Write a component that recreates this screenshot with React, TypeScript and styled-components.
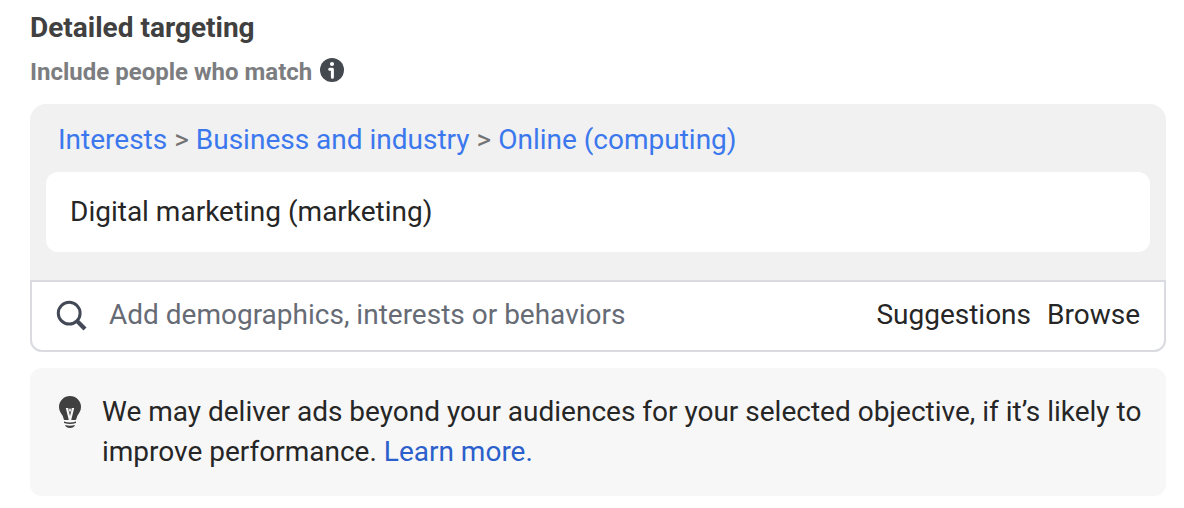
import React from "react";
import styled, { createGlobalStyle } from "styled-components";

const GlobalStyle = createGlobalStyle`
  *, *::before, *::after { box-sizing: border-box; }
  body {
    margin: 0;
    background: #fff;
    color: #262626;
    font-family: Roboto, "Liberation Sans", sans-serif;
    font-size: 28px;
    line-height: 40px;
  }
`;

const Page = styled.main`
  padding: 8px 18px 12px 30px;
`;

const Title = styled.h1`
  margin: 0;
  font-size: 28px;
  line-height: 40px;
  font-weight: 700;
  color: #404040;
`;

const Subtitle = styled.h2`
  display: flex;
  align-items: center;
  gap: 8px;
  margin: 4px 0 12px;
  font-size: 24px;
  line-height: 40px;
  font-weight: 700;
  color: #7c7d80;
`;

const InfoButton = styled.button`
  display: flex;
  padding: 0 0 4px;
  border: 0;
  background: none;
  cursor: pointer;
`;

const Selector = styled.section`
  border-radius: 16px 16px 12px 12px;
  background: #f1f1f1;
`;

const Selected = styled.div`
  padding: 16px 16px 28px;
`;

const Breadcrumb = styled.nav`
  padding: 0 12px 12px;
  color: #737373;
`;

const Link = styled.a<{ $dark?: boolean }>`
  color: ${(p) => (p.$dark ? "#2b5fcb" : "#3b78ee")};
  text-decoration: none;
`;

const Interest = styled.div`
  padding: 20px 24px;
  border-radius: 12px;
  background: #fff;
`;

const SearchRow = styled.form`
  display: flex;
  align-items: center;
  height: 72px;
  padding: 0 24px 2px;
  border: 2px solid #dadbe0;
  border-radius: 0 0 12px 12px;
  background: #fff;
`;

const SearchInput = styled.input`
  flex: 1;
  min-width: 0;
  height: 40px;
  margin-left: 21px;
  padding: 0;
  border: 0;
  outline: 0;
  background: none;
  color: #262626;
  font: inherit;
  &::placeholder { color: #666b75; opacity: 1; }
`;

const TextButton = styled.button`
  margin-left: 16px;
  padding: 0;
  border: 0;
  background: none;
  color: #262626;
  font: inherit;
  cursor: pointer;
`;

const Notice = styled.aside`
  display: flex;
  align-items: flex-start;
  gap: 20px;
  margin-top: 16px;
  padding: 24px 24px 24px 28px;
  border-radius: 12px;
  background: #f7f7f7;
`;

const NoticeIcon = styled.span`
  display: flex;
  flex: none;
  padding-top: 4px;
`;

const NoticeText = styled.p`
  margin: 0;
`;

export default function App() {
  return (
    <>
      <GlobalStyle />
      <Page>
        <Title>Detailed targeting</Title>
        <Subtitle>
          Include people who match
          <InfoButton type="button" aria-label="More information">
            <svg width="24" height="24" viewBox="0 0 24 24">
              <circle cx="12" cy="12" r="12" fill="#444950" />
              <circle cx="12" cy="6" r="2.1" fill="#fff" />
              <path d="M9.7 11.2h2.7v8" fill="none" stroke="#fff" strokeWidth="3" strokeLinecap="round" strokeLinejoin="round" />
            </svg>
          </InfoButton>
        </Subtitle>
        <Selector>
          <Selected>
            <Breadcrumb aria-label="Category">
              <Link href="#interests">Interests</Link>
              {" > "}
              <Link href="#business">Business and industry</Link>
              {" > "}
              <Link href="#online">Online (computing)</Link>
            </Breadcrumb>
            <Interest>Digital marketing (marketing)</Interest>
          </Selected>
          <SearchRow>
            <svg width="32" height="32" viewBox="0 0 32 32" fill="none" stroke="#434956">
              <circle cx="13.2" cy="14.200" r="10.900" strokeWidth="3" />
              <path d="M20.800 21.800L29 30" strokeWidth="4.200" />
            </svg>
            <SearchInput aria-label="Detailed targeting" placeholder="Add demographics, interests or behaviors" />
            <TextButton type="button">Suggestions</TextButton>
            <TextButton type="button">Browse</TextButton>
          </SearchRow>
        </Selector>
        <Notice>
          <NoticeIcon>
            <svg width="24" height="32" viewBox="0 0 24 32">
              <path d="M12 0A11 11 0 0 0 1 11c0 4 2 6 3.500 8.500C5.500 21.500 5.500 24 6.500 24h11c1 0 1-2.500 2-4.500C21 17 23 15 23 11A11 11 0 0 0 12 0z" fill="#404040" />
              <path d="M7.800 12h2.200l2 8 2-8h2.200l-3 12h-2.400z" fill="#f7f7f7" />
              <path d="M11 12.500l1 3 1-3" fill="none" stroke="#f7f7f7" strokeWidth="1" />
              <path d="M6 25.500q6 1.800 12 0v1.500q-6 2-12 0zM7 29q5 1.500 10 0c-.5 2-2.500 3-5 3s-4.500-1-5-3z" fill="#404040" />
            </svg>
          </NoticeIcon>
          <NoticeText>
            We may deliver ads beyond your audiences for your selected objective, if it’s likely to improve performance.{" "}
            <Link $dark href="#learn-more">Learn more.</Link>
          </NoticeText>
        </Notice>
      </Page>
    </>
  );
}
